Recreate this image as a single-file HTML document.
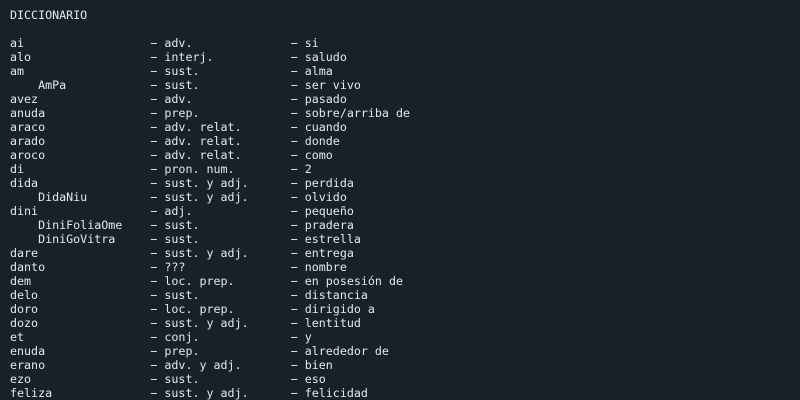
<!DOCTYPE html>
<html><head><meta charset="utf-8"><style>
html,body{margin:0;padding:0;background:#182129;width:800px;height:400px;overflow:hidden}
pre{margin:0;padding:8px 0 0 10px;font-family:"DejaVu Sans Mono","Liberation Mono",monospace;font-size:11.67px;line-height:14px;color:#e6e8ea}
</style></head><body><pre>DICCIONARIO

ai                  − adv.              − si
alo                 − interj.           − saludo
am                  − sust.             − alma
    AmPa            − sust.             − ser vivo
avez                − adv.              − pasado
anuda               − prep.             − sobre/arriba de
araco               − adv. relat.       − cuando
arado               − adv. relat.       − donde
aroco               − adv. relat.       − como
di                  − pron. num.        − 2
dida                − sust. y adj.      − perdida
    DidaNiu         − sust. y adj.      − olvido
dini                − adj.              − pequeño
    DiniFoliaOme    − sust.             − pradera
    DiniGoVitra     − sust.             − estrella
dare                − sust. y adj.      − entrega
danto               − ???               − nombre
dem                 − loc. prep.        − en posesión de
delo                − sust.             − distancia
doro                − loc. prep.        − dirigido a
dozo                − sust. y adj.      − lentitud
et                  − conj.             − y
enuda               − prep.             − alrededor de
erano               − adv. y adj.       − bien
ezo                 − sust.             − eso
feliza              − sust. y adj.      − felicidad
</pre></body></html>
